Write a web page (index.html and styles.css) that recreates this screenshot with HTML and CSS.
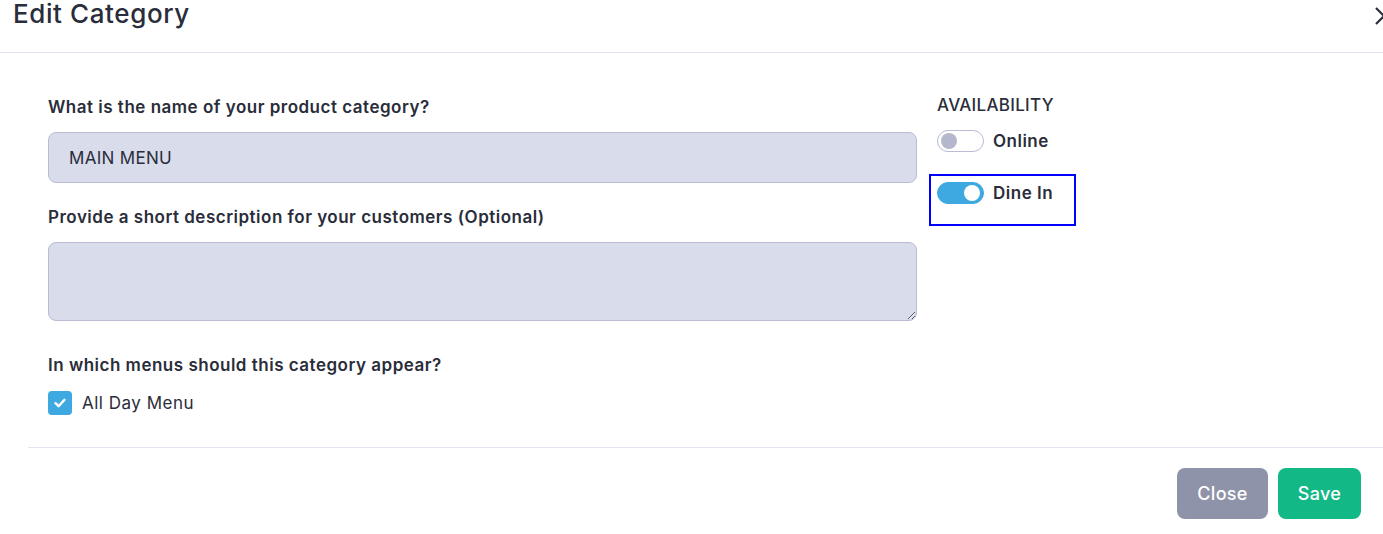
FILE: index.html
```html
<!DOCTYPE html>
<html lang="en">
<head>
  <meta charset="UTF-8">
  <title>Edit Category</title>
  <link rel="stylesheet" href="styles.css">
</head>
<body>
  <div class="modal">
    <div class="modal-header">
      <h1 class="modal-title">Edit Category</h1>
      <span class="close-x">
        <svg width="14" height="20" viewBox="0 0 14 20"><path d="M1 2 L9 10 L1 18" stroke="#2a2d3a" stroke-width="2.2" fill="none"/></svg>
      </span>
    </div>
    <div class="modal-body">
      <div class="form-col">
        <label class="field-label">What is the name of your product category?</label>
        <input class="field" type="text" value="MAIN MENU">
        <label class="field-label">Provide a short description for your customers (Optional)</label>
        <textarea class="field area"></textarea>
        <label class="field-label">In which menus should this category appear?</label>
        <label class="check-row">
          <span class="checkbox">
            <svg width="14" height="14" viewBox="0 0 14 14"><path d="M2.5 7.2 L5.6 10.2 L11.5 3.8" stroke="#fff" stroke-width="2.4" fill="none" stroke-linecap="round" stroke-linejoin="round"/></svg>
          </span>
          All Day Menu
        </label>
      </div>
      <div class="side-col">
        <div class="side-title">AVAILABILITY</div>
        <div class="toggle-row">
          <span class="toggle"><span class="knob"></span></span>
          <span class="toggle-label">Online</span>
        </div>
        <div class="toggle-row selected">
          <span class="toggle on"><span class="knob"></span></span>
          <span class="toggle-label">Dine In</span>
        </div>
      </div>
    </div>
    <div class="modal-footer">
      <button class="btn btn-close">Close</button>
      <button class="btn btn-save">Save</button>
    </div>
  </div>
</body>
</html>
```

FILE: styles.css
```css
body { margin: 0; font-family: Inter, "Open Sans", sans-serif; color: #2a2d3a; background: #fff; overflow: hidden; }
.modal { width: 1383px; }
.modal-header { display: flex; justify-content: space-between; align-items: flex-start; height: 53px; border-bottom: 1px solid #e3e4ee; box-sizing: border-box; padding: 0 0 0 13px; }
.modal-title { margin: 0; font-size: 26px; font-weight: 500; line-height: 27px; letter-spacing: 0.6px; }
.close-x { padding-top: 6px; margin-right: -6px; }
.modal-body { display: flex; gap: 20px; padding: 44px 0 32px 48px; }
.form-col { width: 869px; display: flex; flex-direction: column; }
.field-label { font-size: 17px; font-weight: 600; line-height: 20px; letter-spacing: 0.5px; margin-bottom: 15px; }
.field { font-family: inherit; font-size: 17px; letter-spacing: 0.3px; color: #2a2d3a; background: #d9dcea; border: 1px solid #b9bcd3; border-radius: 8px; padding: 0 20px; height: 51px; box-sizing: border-box; margin-bottom: 24px; }
.area { height: 79px; resize: vertical; padding-top: 10px; margin-bottom: 34px; }
.check-row { display: flex; align-items: center; gap: 10px; font-size: 17px; letter-spacing: 0.5px; margin-top: 1px; }
.checkbox { width: 24px; height: 24px; background: #3ea8e0; border-radius: 4px; display: flex; align-items: center; justify-content: center; }
.side-col { margin-top: -2px; }
.side-title { font-size: 17px; font-weight: 500; line-height: 20px; letter-spacing: 0.3px; margin-bottom: 15px; }
.toggle-row { display: flex; align-items: center; gap: 9px; width: 130px; height: 22px; margin-bottom: 14px; }
.toggle-row.selected { border: 2px solid #0000ff; margin-left: -8px; padding: 6px 6px 20px 6px; width: 147px; height: 52px; box-sizing: border-box; align-items: flex-start; margin-top: 22px; }
.toggle { width: 47px; height: 22px; border: 1px solid #b9bcd3; border-radius: 11px; box-sizing: border-box; display: flex; align-items: center; padding: 0 3px; background: #fff; flex-shrink: 0; }
.toggle .knob { width: 16px; height: 16px; border-radius: 50%; background: #b5b7cc; }
.toggle.on { background: #3ea8e0; border-color: #3ea8e0; justify-content: flex-end; }
.toggle.on .knob { background: #fff; }
.toggle-label { font-size: 17px; font-weight: 600; letter-spacing: 0.5px; line-height: 22px; }
.modal-footer { margin-left: 28px; border-top: 1px solid #e3e4ee; display: flex; justify-content: flex-end; gap: 10px; padding: 20px 22px 0 0; }
.btn { font-family: inherit; font-size: 18px; font-weight: 500; letter-spacing: 0.3px; color: #fff; border: none; border-radius: 8px; height: 51px; padding: 0; cursor: pointer; }
.btn-close { background: #8f93aa; width: 91px; }
.btn-save { background: #12b886; width: 83px; }
```
